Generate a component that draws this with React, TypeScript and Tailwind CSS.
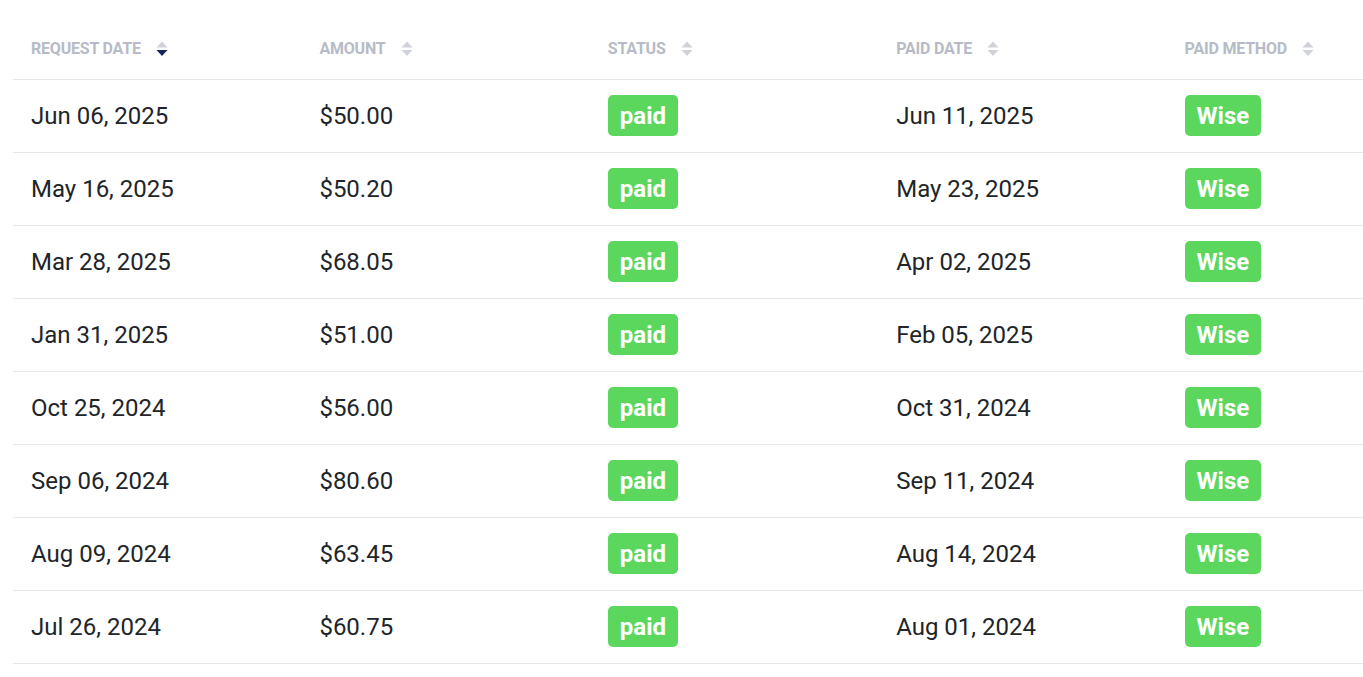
import React from "react";

type Payout = {
  requested: string;
  amount: string;
  status: string;
  paid: string;
  method: string;
};

const payouts: Payout[] = [
  { requested: "Jun 06, 2025", amount: "$50.00", status: "paid", paid: "Jun 11, 2025", method: "Wise" },
  { requested: "May 16, 2025", amount: "$50.20", status: "paid", paid: "May 23, 2025", method: "Wise" },
  { requested: "Mar 28, 2025", amount: "$68.05", status: "paid", paid: "Apr 02, 2025", method: "Wise" },
  { requested: "Jan 31, 2025", amount: "$51.00", status: "paid", paid: "Feb 05, 2025", method: "Wise" },
  { requested: "Oct 25, 2024", amount: "$56.00", status: "paid", paid: "Oct 31, 2024", method: "Wise" },
  { requested: "Sep 06, 2024", amount: "$80.60", status: "paid", paid: "Sep 11, 2024", method: "Wise" },
  { requested: "Aug 09, 2024", amount: "$63.45", status: "paid", paid: "Aug 14, 2024", method: "Wise" },
  { requested: "Jul 26, 2024", amount: "$60.75", status: "paid", paid: "Aug 01, 2024", method: "Wise" },
];

const columns = ["Request Date", "Amount", "Status", "Paid Date", "Paid Method"];

const SortIcon = ({ active }: { active?: boolean }) => (
  <svg width="12" height="16" viewBox="0 0 12 16" className="ml-[15px] shrink-0">
    <path d="M6 0.5 L11.5 6.5 L0.5 6.5 Z" fill="#cfd2d8" />
    <path d="M0.5 9 L11.5 9 L6 15 Z" fill={active ? "#16255a" : "#cfd2d8"} />
  </svg>
);

const Badge = ({ label }: { label: string }) => (
  <span className="inline-block rounded-[5px] bg-[#5bd75e] px-[12px] pt-[7px] pb-[5px] text-[24px] font-bold leading-[29px] text-white">
    {label}
  </span>
);

const App = () => {
  return (
    <div
      className="min-h-screen w-full overflow-hidden bg-white pl-[13px] pt-[17px]"
      style={{ fontFamily: "Roboto, 'Liberation Sans', sans-serif" }}
    >
      <table className="w-[1442px] table-fixed border-collapse">
        <thead>
          <tr className="border-b border-[#e5e7eb]">
            {columns.map((col, i) => (
              <th key={col} className="w-[288.4px] h-[62px] pl-[18px] pt-[2px] text-left align-middle">
                <div className="flex items-center">
                  <span className="text-[16px] font-bold uppercase tracking-[-0.2px] text-[#b6bbc7]">
                    {col}
                  </span>
                  <SortIcon active={i === 0} />
                </div>
              </th>
            ))}
          </tr>
        </thead>
        <tbody>
          {payouts.map((p) => (
            <tr key={p.requested} className="h-[73px] border-b border-[#e5e7eb] text-[24px] text-[#212529]">
              <td className="pl-[18px] align-middle">{p.requested}</td>
              <td className="pl-[18px] align-middle">{p.amount}</td>
              <td className="pl-[18px] align-middle">
                <Badge label={p.status} />
              </td>
              <td className="pl-[18px] align-middle">{p.paid}</td>
              <td className="pl-[18px] align-middle">
                <Badge label={p.method} />
              </td>
            </tr>
          ))}
        </tbody>
      </table>
    </div>
  );
};

export default App;
